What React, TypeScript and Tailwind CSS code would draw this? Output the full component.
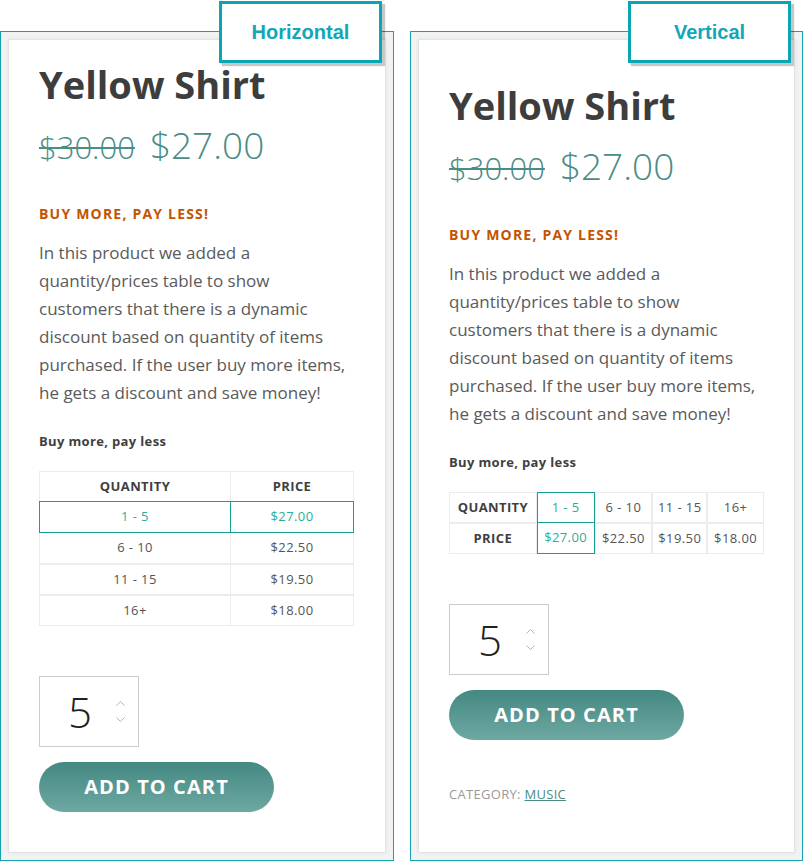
const teal = "text-[#4a8c86]";

function Badge({ label }: { label: string }) {
	return (
		<div className="absolute -top-[31px] right-[11px] flex h-[62px] w-[163px] items-center justify-center border-[3px] border-[#0ba6b6] bg-white shadow-[3px_3px_1px_rgba(0,0,0,0.22)]">
			<span className="font-['Liberation_Sans',Arial,sans-serif] text-[20px] font-bold text-[#11a7b8]">{label}</span>
		</div>
	);
}

function Panel({ badge, children }: { badge: string; children: React.ReactNode }) {
	return (
		<div className="relative h-[830px] border border-[#14a2b2] bg-[#f1f3f3] p-[7px]">
			<div className="h-full border border-[#e2e4e4] bg-white px-[30px] shadow-[0_0_4px_rgba(0,0,0,0.06)]">{children}</div>
			<Badge label={badge} />
		</div>
	);
}

function Intro() {
	return (
		<>
			<h1 className="text-[38px] font-bold leading-[46px] text-[#3d3d3d]">Yellow Shirt</h1>
			<div className={`mt-[14px] flex items-baseline gap-[15px] leading-[48px] ${teal}`}>
				<span className="text-[31px] font-light line-through decoration-[2px]">$30.00</span>
				<span className="text-[37px] font-light">$27.00</span>
			</div>
			<p className="mt-[33px] text-[14px] font-bold leading-[20px] tracking-[1.2px] text-[#c35400]">BUY MORE, PAY LESS!</p>
			<p className="mt-[15px] text-[17px] leading-[28px] text-[#5a5a5a]">
				In this product we added a quantity/prices table to show customers that there is a dynamic discount based on quantity of items purchased. If the user buy more items, he gets a discount and save money!
			</p>
			<p className="mt-[25px] text-[13px] font-bold leading-[18px] tracking-[0.35px] text-[#3f3f3f]">Buy more, pay less</p>
		</>
	);
}

function Chevron({ up }: { up?: boolean }) {
	return (
		<svg width="9" height="5" viewBox="0 0 9 5" fill="none" stroke="#b5b5b5" strokeWidth="1">
			<path d={up ? "M0.5 4.5 L4.5 0.5 L8.5 4.5" : "M0.5 0.5 L4.5 4.5 L8.5 0.5"} />
		</svg>
	);
}

function Cart({ className }: { className: string }) {
	return (
		<div className={className}>
			<div className="flex h-[71px] w-[100px] items-center border border-[#cccccc]">
				<span className="ml-[28px] w-[24px] text-[42px] font-light leading-none text-[#222]">5</span>
				<div className="ml-[24px] flex flex-col gap-[11px]">
					<Chevron up />
					<Chevron />
				</div>
			</div>
			<button className="mt-[15px] h-[50px] w-[235px] rounded-full bg-gradient-to-b from-[#438982] to-[#6ea8a2] text-[20px] font-bold tracking-[1.1px] text-white">
				ADD TO CART
			</button>
		</div>
	);
}

const rows = [
	["1 - 5", "$27.00"],
	["6 - 10", "$22.50"],
	["11 - 15", "$19.50"],
	["16+", "$18.00"],
];

function HorizontalTable() {
	return (
		<div className="mt-[21px] w-[315px] text-[13px] tracking-[0.4px] text-[#555]">
			<div className="flex h-[31px] font-bold text-[#3f3f3f]">
				<div className="flex w-[192px] items-center justify-center border border-[#ececec]">QUANTITY</div>
				<div className="-ml-px flex flex-1 items-center justify-center border border-[#ececec]">PRICE</div>
			</div>
			{rows.map(([q, p], i) => {
				const hi = i === 0;
				const b = hi ? "relative z-10 border-[#17a08f] text-[#2aae9b]" : "border-[#ececec]";
				return (
					<div key={q} className={`flex ${i < 2 ? "-mt-px h-[32px]" : "h-[31px]"}`}>
						<div className={`flex w-[192px] items-center justify-center border ${b}`}>{q}</div>
						<div className={`-ml-px flex flex-1 items-center justify-center border ${b}`}>{p}</div>
					</div>
				);
			})}
		</div>
	);
}

function VerticalTable() {
	const widths = ["w-[58px]", "w-[58px]", "w-[55px]", "w-[57px]"];
	return (
		<div className="mt-[21px] w-[315px] text-[13px] tracking-[0.4px] text-[#555]">
			<div className="flex h-[31px]">
				<div className="flex w-[88px] items-center justify-center border border-[#ececec] font-bold text-[#3f3f3f]">QUANTITY</div>
				{rows.map(([q], i) => (
					<div key={q} className={`flex ${widths[i]} items-center justify-center border ${i === 0 ? "border-[#17a08f] text-[#2aae9b]" : "border-[#ececec]"}`}>
						{q}
					</div>
				))}
			</div>
			<div className="flex h-[31px]">
				<div className="flex w-[88px] items-center justify-center border border-[#ececec] font-bold text-[#3f3f3f]">PRICE</div>
				{rows.map(([q, p], i) => (
					<div key={q} className={`flex ${widths[i]} items-center justify-center border ${i === 0 ? "border-t-0 border-[#17a08f] text-[#2aae9b]" : "border-[#ececec]"}`}>
						{p}
					</div>
				))}
			</div>
		</div>
	);
}

export default function App() {
	return (
		<div className="flex w-[805px] gap-[16px] bg-white pt-[31px] font-['Open_Sans',sans-serif]">
			<div className="w-[394px]">
				<Panel badge="Horizontal">
					<div className="pt-[21px]">
						<Intro />
						<HorizontalTable />
						<Cart className="mt-[50px]" />
					</div>
				</Panel>
			</div>
			<div className="w-[393px]">
				<Panel badge="Vertical">
					<div className="pt-[42px]">
						<Intro />
						<VerticalTable />
						<Cart className="mt-[50px]" />
						<p className="mt-[45px] text-[13px] leading-[18px] tracking-[0.3px] text-[#9a9a9a]">
							CATEGORY: <a className={`underline ${teal}`}>MUSIC</a>
						</p>
					</div>
				</Panel>
			</div>
		</div>
	);
}
